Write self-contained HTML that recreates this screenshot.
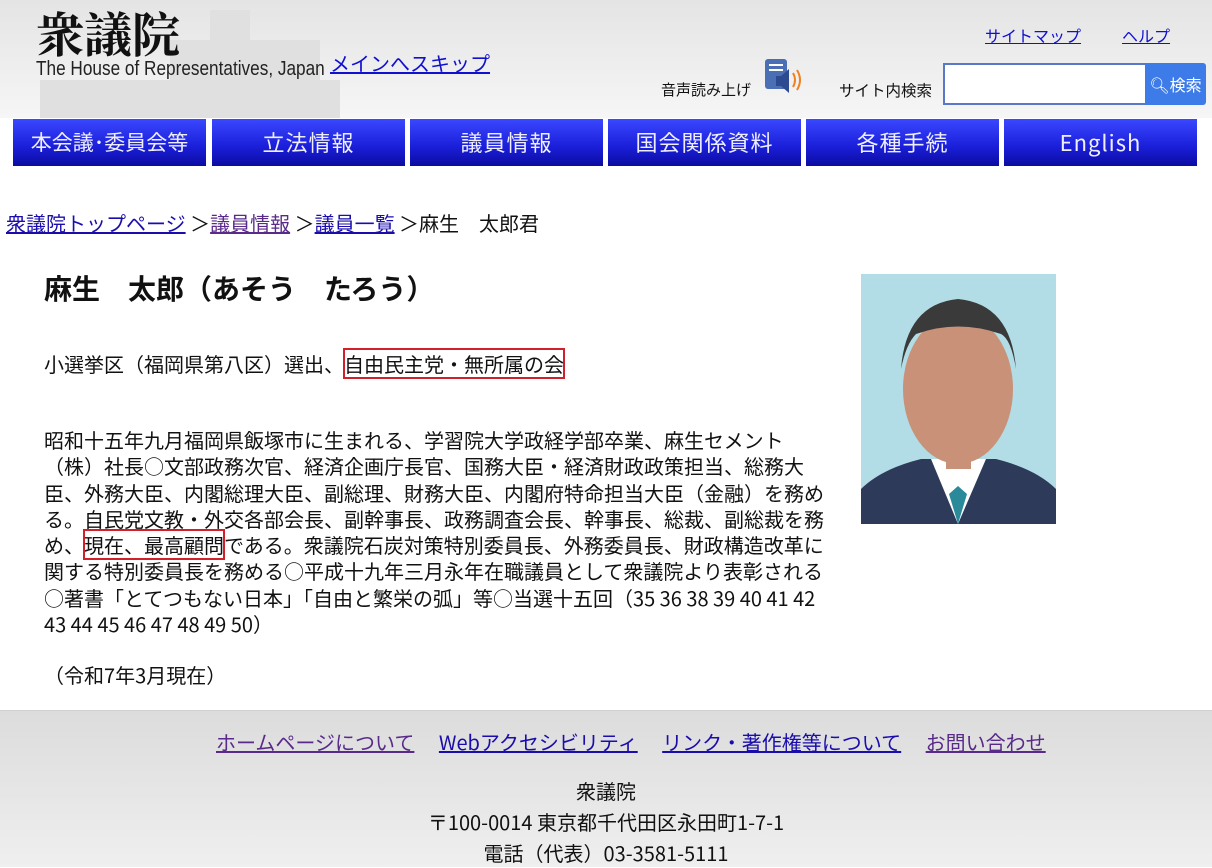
<!DOCTYPE html>
<html><head><meta charset="utf-8"><style>
body{margin:0;width:1212px;height:866px;overflow:hidden;background:#fff;font-family:"Noto Sans CJK JP","Liberation Sans",sans-serif;color:#111;position:relative}
.a{position:absolute;white-space:nowrap}
a{color:#1a0dab;text-decoration:underline}
.hdr{position:absolute;left:0;top:0;width:1212px;height:118px;background:linear-gradient(#e4e4e4,#f6f6f6)}
.nav{position:absolute;top:119px;height:47px;width:193px;background:linear-gradient(#3a48ff,#1a1ed8 60%,#0c0ca0);color:#eef;font-size:22px;text-align:center;line-height:47px;letter-spacing:1px}
.t{font-size:20px;line-height:26.3px}
.box{outline:2px solid #d0202a;outline-offset:-1px}
.foot{position:absolute;left:0;top:710px;width:1212px;height:156px;background:linear-gradient(#dcdcdc,#efefef);border-top:1px solid #d0d0d0}
</style></head><body>
<div class="hdr"></div>
<svg class="a" style="left:20px;top:0" width="330" height="118"><g fill="#e0e0e0"><rect x="190" y="10" width="40" height="108"/><rect x="150" y="40" width="150" height="78"/><rect x="20" y="80" width="300" height="38"/></g></svg>
<div class="a" style="left:36px;top:0px;font-family:'Noto Serif CJK SC',serif;font-weight:bold;font-size:48px;line-height:64px;color:#111">衆議院</div>
<div class="a" style="left:36px;top:58px;font-family:'Liberation Sans',sans-serif;font-size:20px;color:#222;transform:scaleX(.86);transform-origin:left">The House of Representatives, Japan</div>
<a class="a" href="#" style="left:330px;top:49px;font-size:20px;line-height:28px;color:#1010d0">メインへスキップ</a>
<a class="a" href="#" style="left:985px;top:23px;font-size:16px;line-height:24px;color:#1010d0">サイトマップ</a>
<a class="a" href="#" style="left:1122px;top:23px;font-size:16px;line-height:24px;color:#1010d0">ヘルプ</a>
<div class="a" style="left:661px;top:78px;font-size:15px;line-height:24px">音声読み上げ</div>
<svg class="a" style="left:764px;top:58px" width="40" height="38"><rect x="1" y="1" width="22" height="30" rx="3" fill="#4a6fb5"/><rect x="5" y="6" width="14" height="2" fill="#fff"/><rect x="5" y="11" width="14" height="2" fill="#fff"/><path d="M12 18h5l8-7v24l-8-7h-5z" fill="#2c4a90"/><path d="M29 15q4 7 0 14M33 12q6 10 0 20" stroke="#f08020" stroke-width="2" fill="none"/></svg>
<div class="a" style="left:839px;top:78px;font-size:15.5px;line-height:24px">サイト内検索</div>
<div class="a" style="left:943px;top:63px;width:200px;height:38px;background:#fff;border:2px solid #5a78c8"></div>
<div class="a" style="left:1145px;top:63px;width:61px;height:42px;background:#3d7be8;border-radius:0 3px 3px 0;color:#fff;font-size:16px;line-height:42px;text-align:center">&#x1F50D;&#xFE0E;検索</div>
<div class="nav" style="left:13px;font-size:21px;letter-spacing:0">本会議･委員会等</div>
<div class="nav" style="left:212px">立法情報</div>
<div class="nav" style="left:410px">議員情報</div>
<div class="nav" style="left:608px">国会関係資料</div>
<div class="nav" style="left:806px">各種手続</div>
<div class="nav" style="left:1004px">English</div>
<div class="a" style="left:6px;top:209px;font-size:20px;line-height:28px"><a href="#">衆議院トップページ</a> ＞<a href="#" style="color:#5a2a8a">議員情報</a> ＞<a href="#">議員一覧</a> ＞麻生　太郎君</div>
<div class="a" style="left:44px;top:268px;font-size:28px;line-height:40px;font-weight:bold">麻生　太郎（あそう　たろう）</div>
<div class="a" style="left:44px;top:350px;font-size:20px;line-height:28px">小選挙区（福岡県第八区）選出、<span class="box">自由民主党・無所属の会</span></div>
<div class="a t" style="left:44px;top:427px">昭和十五年九月福岡県飯塚市に生まれる、学習院大学政経学部卒業、麻生セメント<br>（株）社長○文部政務次官、経済企画庁長官、国務大臣・経済財政政策担当、総務大<br>臣、外務大臣、内閣総理大臣、副総理、財務大臣、内閣府特命担当大臣（金融）を務め<br>る。自民党文教・外交各部会長、副幹事長、政務調査会長、幹事長、総裁、副総裁を務<br>め、<span class="box">現在、最高顧問</span>である。衆議院石炭対策特別委員長、外務委員長、財政構造改革に<br>関する特別委員長を務める○平成十九年三月永年在職議員として衆議院より表彰される<br>○著書「とてつもない日本」「自由と繁栄の弧」等○当選十五回（35 36 38 39 40 41 42<br>43 44 45 46 47 48 49 50）</div>
<div class="a" style="left:44px;top:661px;font-size:20px;line-height:28px">（令和7年3月現在）</div>
<svg class="a" style="left:861px;top:274px" width="195" height="250"><rect width="195" height="250" fill="#b2dde6"/><path d="M0 250 L0 215 Q20 195 60 185 L135 185 Q175 195 195 215 L195 250Z" fill="#2e3a5a"/><path d="M70 185 L97 250 L125 185Z" fill="#fff"/><path d="M88 220 L97 250 L106 220 L97 212Z" fill="#2a8a9a"/><ellipse cx="97" cy="115" rx="55" ry="75" fill="#c99178"/><path d="M40 95 Q45 30 97 25 Q150 30 155 95 Q150 65 140 60 Q97 45 55 60 Q45 70 40 95Z" fill="#3a3a3a"/><rect x="85" y="170" width="25" height="25" fill="#c99178"/></svg>
<div class="foot"></div>
<div class="a" style="left:216px;top:728px;font-size:20px;line-height:28px"><a href="#" style="color:#5a2a8a">ホームページについて</a>　 <a href="#">Webアクセシビリティ</a>　 <a href="#">リンク・著作権等について</a>　 <a href="#" style="color:#5a2a8a">お問い合わせ</a></div>
<div class="a" style="left:0;top:775px;width:1212px;text-align:center;font-size:20px;line-height:31px">衆議院<br>〒100-0014 東京都千代田区永田町1-7-1<br>電話（代表）03-3581-5111</div>
</body></html>
